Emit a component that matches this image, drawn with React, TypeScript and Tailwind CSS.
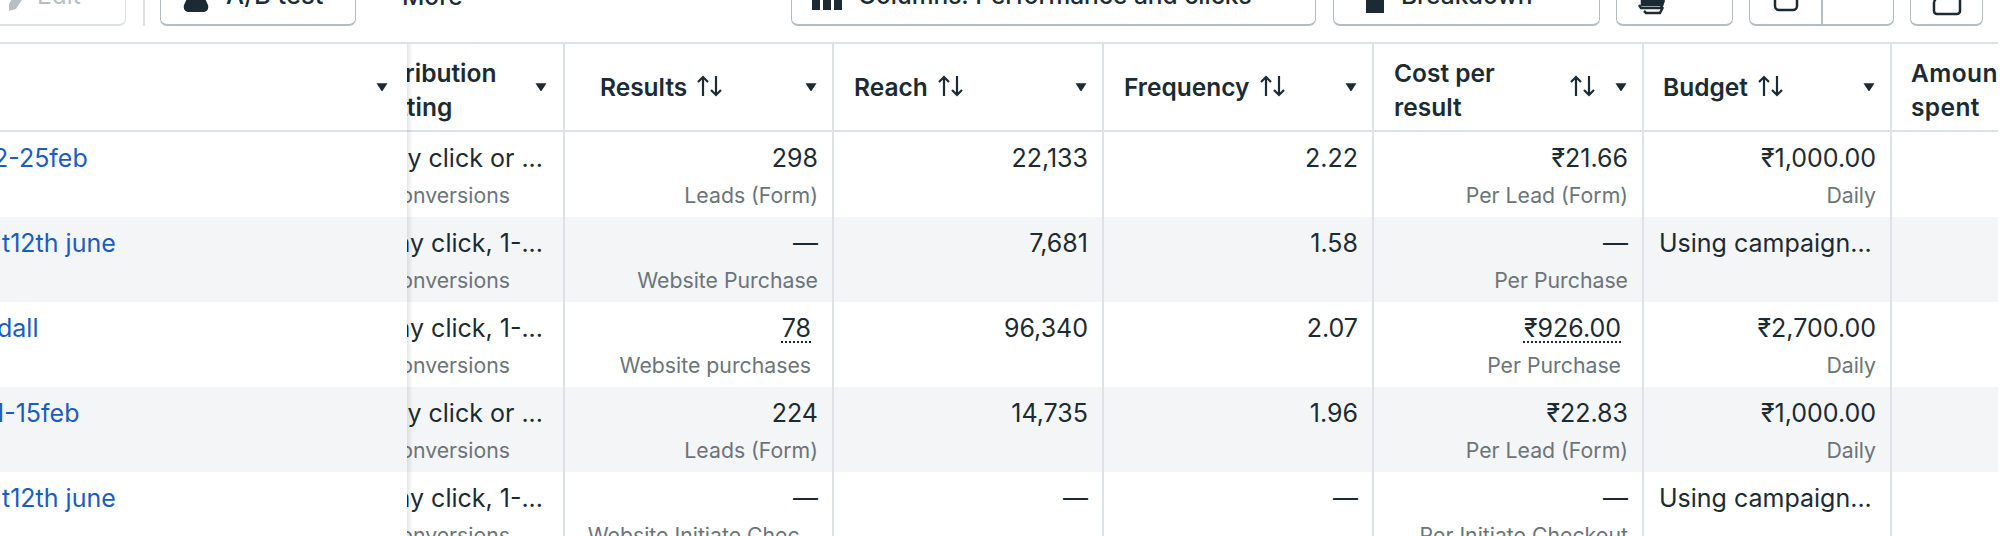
import React from 'react';

type Cell = { main: string; sub?: string; dotted?: boolean; left?: boolean };
type Row = { name: string; nameClass: string; attr: string; results: Cell; reach: string; freq: string; cost: Cell; budget: Cell };

const rows: Row[] = [
  {
    name: '2-25feb',
    nameClass: '-ml-[7px]',
    attr: 'ay click or ...',
    results: { main: '298', sub: 'Leads (Form)' },
    reach: '22,133',
    freq: '2.22',
    cost: { main: '₹21.66', sub: 'Per Lead (Form)' },
    budget: { main: '₹1,000.00', sub: 'Daily' },
  },
  {
    name: 't12th june',
    nameClass: 'ml-[2px]',
    attr: 'ay click, 1-...',
    results: { main: '—', sub: 'Website Purchase' },
    reach: '7,681',
    freq: '1.58',
    cost: { main: '—', sub: 'Per Purchase' },
    budget: { main: 'Using campaign...', left: true },
  },
  {
    name: 'dall',
    nameClass: '-ml-[3px]',
    attr: 'ay click, 1-...',
    results: { main: '78', sub: 'Website purchases', dotted: true },
    reach: '96,340',
    freq: '2.07',
    cost: { main: '₹926.00', sub: 'Per Purchase', dotted: true },
    budget: { main: '₹2,700.00', sub: 'Daily' },
  },
  {
    name: '1-15feb',
    nameClass: '-ml-[6px]',
    attr: 'ay click or ...',
    results: { main: '224', sub: 'Leads (Form)' },
    reach: '14,735',
    freq: '1.96',
    cost: { main: '₹22.83', sub: 'Per Lead (Form)' },
    budget: { main: '₹1,000.00', sub: 'Daily' },
  },
  {
    name: 't12th june',
    nameClass: 'ml-[2px]',
    attr: 'ay click, 1-...',
    results: { main: '—', sub: 'Website Initiate Chec...' },
    reach: '—',
    freq: '—',
    cost: { main: '—', sub: 'Per Initiate Checkout' },
    budget: { main: 'Using campaign...', left: true },
  },
];

const Caret = () => (
  <svg width="14" height="10" viewBox="0 0 14 10" className="shrink-0 text-[#1c2b33]">
    <path d="M1.5 1.2h11L7.8 8.6a1 1 0 0 1-1.6 0z" fill="currentColor" />
  </svg>
);

const SortArrows = () => (
  <svg width="27" height="22" viewBox="0 0 27 22" fill="none" stroke="#1c2b33" strokeWidth="2.2" className="ml-[9px] -mt-[3px] shrink-0">
    <path d="M7 21V2M2 7l5-5 5 5" />
    <path d="M20 1v19M15 15l5 5 5-5" />
  </svg>
);

const ToolButton = ({ className, children }: { className: string; children?: React.ReactNode }) => (
  <div className={`flex h-[60px] items-center rounded-b-[7px] border border-b-2 border-[#b4bdc3] bg-white ${className}`}>
    {children}
  </div>
);

const Metric = ({ cell, width }: { cell: Cell; width: string }) => (
  <div className={`${width} shrink-0 overflow-hidden border-r-2 border-[#dfe2e5] pl-[15px] pr-[14px] pt-[10px]`}>
    {cell.left ? (
      <div className="whitespace-nowrap text-[25px] leading-[33px] text-[#1c2b33]">{cell.main}</div>
    ) : (
      <div className={`flex flex-col items-end ${cell.dotted ? 'pr-[7px]' : ''}`}>
        <span
          className={`text-[25px] leading-[33px] text-[#1c2b33] ${
            cell.dotted ? 'underline decoration-dotted decoration-2 underline-offset-[4px]' : ''
          }`}
        >
          {cell.main}
        </span>
        <span className="mt-[5px] whitespace-nowrap text-[21.25px] leading-[30px] text-[#6b7479]">{cell.sub}</span>
      </div>
    )}
  </div>
);

const Plain = ({ value, width }: { value: string; width: string }) => (
  <div className={`${width} shrink-0 border-r-2 border-[#dfe2e5] pr-[14px] pt-[10px] text-right text-[25px] leading-[33px] text-[#1c2b33]`}>
    {value}
  </div>
);

const HeaderCell = ({ label, width, pad }: { label: string; width: string; pad: string }) => (
  <div className={`${width} ${pad} flex shrink-0 items-center justify-between border-r-2 border-[#dfe2e5] pr-[14px]`}>
    <div className="flex items-center">
      <span className="text-[24.5px] font-semibold text-[#1c2b33]">{label}</span>
      <SortArrows />
    </div>
    <Caret />
  </div>
);

export default function App() {
  return (
    <div
      className="h-[536px] w-[2000px] overflow-hidden bg-white"
      style={{ fontFamily: 'Inter, "Liberation Sans", sans-serif' }}
    >
      {/* toolbar, cut off by the top of the picture */}
      <div className="-mt-[34px] flex h-[76px] items-start text-[24.5px] font-medium text-[#1c2b33]">
        <ToolButton className="-ml-[20px] w-[146px] border-[#dde1e4] pl-[26px] font-normal text-[#b8bfc4]">
          <svg width="18" height="24" viewBox="0 0 18 24" className="mr-[12px] mt-[6px] shrink-0" fill="currentColor">
            <path d="M12 0h6v8l-9 14-7 2 0-7z" />
          </svg>
          Edit
        </ToolButton>
        <div className="ml-[17px] h-[60px] w-[2px] bg-[#dfe2e5]" />
        <ToolButton className="ml-[15px] w-[196px] pl-[22px]">
          <svg width="26" height="22" viewBox="0 0 26 22" className="mr-[17px] mt-[10px] shrink-0" fill="#1c2b33">
            <path d="M8 0h10l7 15c1 4-1 7-4 7H5c-3 0-5-3-4-7z" />
          </svg>
          <span className="whitespace-nowrap text-[25.5px]">A/B test</span>
        </ToolButton>
        <div className="ml-[46px] flex h-[60px] w-[60px] items-center whitespace-nowrap">More</div>
        <ToolButton className="ml-[329px] w-[525px] pl-[20px]">
          <svg width="30" height="22" viewBox="0 0 30 22" className="mr-[16px] mt-[10px] shrink-0" fill="#1c2b33">
            <rect x="0" y="0" width="8" height="20" />
            <rect x="11" y="0" width="8" height="20" />
            <rect x="22" y="0" width="8" height="20" />
          </svg>
          <span className="whitespace-nowrap">Columns: Performance and clicks</span>
        </ToolButton>
        <ToolButton className="ml-[17px] w-[267px] pl-[32px]">
          <svg width="18" height="22" viewBox="0 0 18 22" className="mr-[17px] mt-[12px] shrink-0" fill="#1c2b33">
            <rect x="0" y="0" width="18" height="22" />
          </svg>
          Breakdown
        </ToolButton>
        <ToolButton className="ml-[16px] w-[117px] pl-[21px]">
          <svg width="28" height="24" viewBox="0 0 28 24" className="mt-[14px] shrink-0" fill="none" stroke="#1c2b33" strokeWidth="2.5">
            <path d="M1 14l2 3h20l3-8" />
            <path d="M6 20l2 2h14l3-6" />
            <rect x="4" y="0" width="20" height="14" fill="#1c2b33" />
          </svg>
        </ToolButton>
        <ToolButton className="ml-[16px] w-[145px]">
          <div className="flex h-full w-[73px] items-center justify-center border-r-2 border-[#b4bdc3]">
            <svg width="26" height="24" viewBox="0 0 26 24" className="mt-[8px]" fill="none" stroke="#1c2b33" strokeWidth="2.5">
              <path d="M2 0v18a4 4 0 0 0 4 4h14a4 4 0 0 0 4-4V0" />
            </svg>
          </div>
        </ToolButton>
        <ToolButton className="ml-[16px] w-[73px] justify-center">
          <svg width="30" height="26" viewBox="0 0 30 26" className="mt-[14px]" fill="none" stroke="#1c2b33" strokeWidth="2.5">
            <path d="M2 12v9a3 3 0 0 0 3 3h20a3 3 0 0 0 3-3V0M2 12L8 0" />
          </svg>
        </ToolButton>
      </div>

      {/* table */}
      <div className="relative w-[1998px] border-t-2 border-[#dfe2e5]">
        {/* shadow of the frozen column */}
        <div className="absolute bottom-0 left-[407px] top-0 z-20 w-[6px] bg-gradient-to-r from-black/10 to-transparent" />

        <div className="flex h-[88px] border-b-2 border-[#dfe2e5]">
          <div className="flex w-[407px] shrink-0 items-center justify-end pr-[18px]">
            <Caret />
          </div>
          <div className="flex w-[158px] shrink-0 items-center justify-between overflow-hidden border-r-2 border-[#dfe2e5] pr-[15px]">
            <span className="-ml-[36px] mt-[5px] text-[24.5px] font-semibold leading-[34px] text-[#1c2b33]">
              Attribution
              <br />
              setting
            </span>
            <Caret />
          </div>
          <HeaderCell label="Results" width="w-[269px]" pad="pl-[35px]" />
          <HeaderCell label="Reach" width="w-[270px]" pad="pl-[20px]" />
          <HeaderCell label="Frequency" width="w-[270px]" pad="pl-[20px]" />
          <div className="flex w-[270px] shrink-0 items-center justify-between border-r-2 border-[#dfe2e5] pl-[20px] pr-[14px]">
            <span className="mt-[5px] text-[24.5px] font-semibold leading-[34px] text-[#1c2b33]">
              Cost per
              <br />
              result
            </span>
            <div className="flex items-center gap-[18px]">
              <SortArrows />
              <Caret />
            </div>
          </div>
          <HeaderCell label="Budget" width="w-[248px]" pad="pl-[19px]" />
          <div className="flex flex-1 items-center overflow-hidden whitespace-nowrap pl-[19px] text-[24.5px] font-semibold leading-[34px] tracking-[0.4px] text-[#1c2b33]">
            <span className="mt-[5px]">
              Amount
              <br />
              spent
            </span>
          </div>
        </div>

        {rows.map((row, i) => (
          <div key={i} className={`flex h-[85px] ${i % 2 === 1 ? 'bg-[#f4f5f7]' : 'bg-white'}`}>
            <div className="w-[407px] shrink-0 overflow-hidden pt-[10px] text-[25px] leading-[33px] text-[#1b5cc4]">
              <div className={row.nameClass}>{row.name}</div>
            </div>
            <div className="flex w-[158px] shrink-0 flex-col items-end overflow-hidden border-r-2 border-[#dfe2e5] pt-[10px]">
              <div className="whitespace-nowrap pr-[20px] text-[25px] leading-[33px] text-[#1c2b33]">{row.attr}</div>
              <div className="mt-[5px] whitespace-nowrap pr-[53px] text-[21.25px] leading-[30px] text-[#6b7479]">conversions</div>
            </div>
            <Metric cell={row.results} width="w-[269px]" />
            <Plain value={row.reach} width="w-[270px]" />
            <Plain value={row.freq} width="w-[270px]" />
            <Metric cell={row.cost} width="w-[270px]" />
            <Metric cell={row.budget} width="w-[248px]" />
            <div className="flex-1" />
          </div>
        ))}
      </div>
    </div>
  );
}
